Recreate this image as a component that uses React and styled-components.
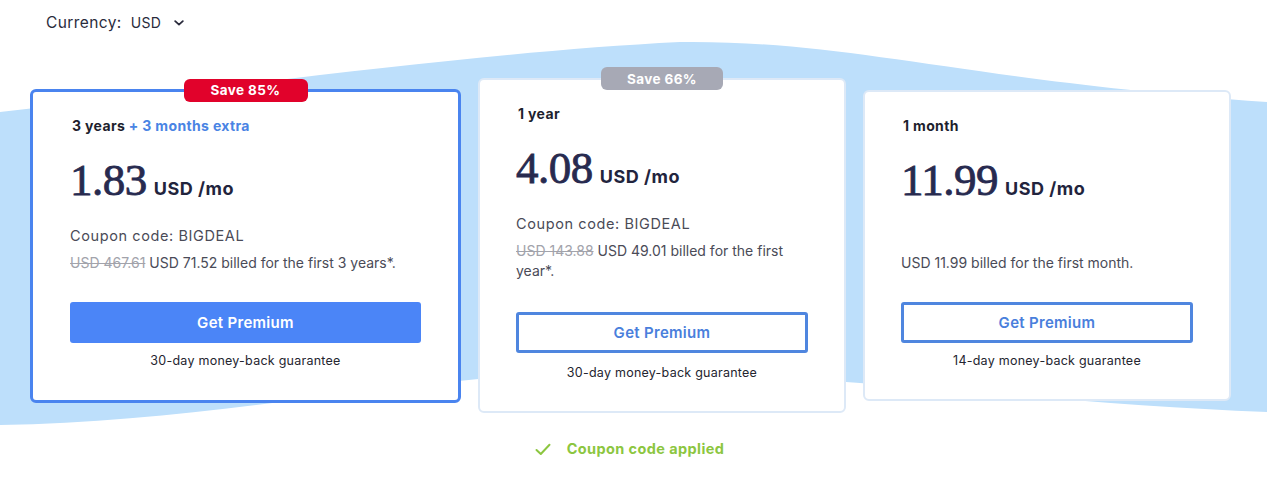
import React from "react";
import styled, { createGlobalStyle } from "styled-components";

const Global = createGlobalStyle`
  html, body { margin: 0; padding: 0; background: #ffffff; }
  body { font-family: "Inter", "Open Sans", sans-serif; color: #22243a; overflow: hidden; }
  * { box-sizing: border-box; }
`;

const Page = styled.div`
  position: relative;
  width: 1267px;
  height: 485px;
  overflow: hidden;
`;

const Wave = styled.svg`
  position: absolute;
  left: 0;
  top: 0;
  width: 1267px;
  height: 485px;
  z-index: 0;
`;

const Content = styled.div`
  position: relative;
  z-index: 1;
  display: flex;
  flex-direction: column;
`;

const CurrencyRow = styled.div`
  display: flex;
  align-items: center;
  gap: 9px;
  padding: 13px 0 0 46px;
  height: 33px;
  font-size: 15.5px;
  letter-spacing: 0.4px;
  line-height: 20px;
  color: #2a2b3c;
`;

const CurrencyValue = styled.span`
  display: inline-flex;
  align-items: center;
  gap: 13px;
  font-size: 14px;
  letter-spacing: 0.3px;
`;

const Cards = styled.div`
  display: flex;
  align-items: center;
  gap: 17px;
  padding-left: 30px;
  margin-top: 45px;
  height: 335px;
`;

const Card = styled.div`
  position: relative;
  width: ${(p) => (p.$featured ? "431px" : "368px")};
  background: #ffffff;
  border: ${(p) => (p.$featured ? "3px solid #4a84ef" : "2px solid #dde9f7")};
  border-radius: 6px;
  padding: 24px ${(p) => (p.$featured ? "37px" : "36px")} ${(p) => (p.$featured ? "30px" : "29px")};
  display: flex;
  flex-direction: column;
`;

const Badge = styled.div`
  position: absolute;
  top: -13px;
  left: 50%;
  transform: translateX(-50%);
  height: 23px;
  width: ${(p) => (p.$featured ? "124px" : "122px")};
  border-radius: 6px;
  background: ${(p) => p.$color};
  color: #ffffff;
  font-size: 13.5px;
  font-weight: 700;
  display: flex;
  align-items: center;
  justify-content: center;
  letter-spacing: 0.4px;
`;

const Term = styled.div`
  font-size: 14px;
  line-height: 20px;
  font-weight: 700;
  color: #1e1f2e;
  padding-left: 2px;
  letter-spacing: 0.35px;
`;

const Extra = styled.span`
  color: #4a84e4;
`;

const PriceRow = styled.div`
  display: flex;
  align-items: baseline;
  gap: 7px;
  margin-top: 19px;
  height: 50px;
`;

const Amount = styled.span`
  font-family: "Liberation Serif", "DejaVu Serif", serif;
  font-size: 45px;
  line-height: 50px;
  font-weight: 400;
  -webkit-text-stroke: 0.8px #272a4f;
  color: #272a4f;
  letter-spacing: -0.5px;
`;

const Unit = styled.span`
  font-size: 18px;
  font-weight: 700;
  letter-spacing: 0.5px;
  color: #22243d;
`;

const Line = styled.div`
  font-size: 14px;
  line-height: 20px;
  letter-spacing: 0px;
  color: #4a4b57;
  min-height: 20px;
  margin-top: ${(p) => p.$mt || "0px"};
`;

const Coupon = styled(Line)`
  font-size: 14.5px;
  letter-spacing: 0.6px;
`;

const Strike = styled.span`
  color: #a2a3ab;
  text-decoration: line-through;
`;

const Button = styled.button`
  margin-top: ${(p) => (p.$extra ? "31px" : "29px")};
  height: 41px;
  width: 100%;
  border-radius: 3px;
  font-family: "Inter", "Open Sans", sans-serif;
  font-size: 15px;
  letter-spacing: 0.3px;
  font-weight: 600;
  cursor: pointer;
  background: ${(p) => (p.$primary ? "#4b85f7" : "#ffffff")};
  color: ${(p) => (p.$primary ? "#ffffff" : "#4a7fdc")};
  border: ${(p) => (p.$primary ? "none" : "3px solid #4f86df")};
`;

const Guarantee = styled.div`
  margin-top: ${(p) => (p.$extra ? "11px" : "9px")};
  font-size: 12.5px;
  line-height: 18px;
  letter-spacing: 0.25px;
  text-align: center;
  color: #24252f;
`;

const Applied = styled.div`
  display: flex;
  align-items: center;
  justify-content: center;
  gap: 16px;
  margin-top: 26px;
  padding-right: 8px;
  font-size: 14.5px;
  letter-spacing: 0.4px;
  line-height: 20px;
  font-weight: 700;
  color: #8cc640;
`;

const Chevron = () => (
  <svg width="10" height="6" viewBox="0 0 10 6" fill="none">
    <path d="M1.2 1.2 L5 4.6 L8.8 1.2" stroke="#2a2b3c" strokeWidth="1.8" strokeLinecap="round" strokeLinejoin="round" />
  </svg>
);

const Check = () => (
  <svg width="16" height="13" viewBox="0 0 16 13" fill="none">
    <path d="M1.5 7 L5.8 11 L14.5 1.8" stroke="#8cc640" strokeWidth="2" strokeLinecap="round" strokeLinejoin="round" />
  </svg>
);

const plans = [
  {
    featured: true,
    badge: "Save 85%",
    badgeColor: "#e1022b",
    term: "3 years",
    extra: "+ 3 months extra",
    price: "1.83",
    coupon: "Coupon code: BIGDEAL",
    old: "USD 467.61",
    billed: "USD 71.52 billed for the first 3 years*.",
    guarantee: "30-day money-back guarantee",
  },
  {
    badge: "Save 66%",
    badgeColor: "#a7a9b5",
    term: "1 year",
    price: "4.08",
    coupon: "Coupon code: BIGDEAL",
    old: "USD 143.88",
    billed: "USD 49.01 billed for the first year*.",
    guarantee: "30-day money-back guarantee",
    wraps: true,
  },
  {
    term: "1 month",
    price: "11.99",
    coupon: "",
    billed: "USD 11.99 billed for the first month.",
    guarantee: "14-day money-back guarantee",
  },
];

export default function App() {
  return (
    <Page>
      <Global />
      <Wave viewBox="0 0 1267 485" preserveAspectRatio="none">
        <path
          d="M0 112 C 250 85, 480 52, 680 42 C 850 40, 960 80, 1267 102 L 1267 412 C 1050 404, 820 372, 620 372 C 420 372, 220 422, 0 425 Z"
          fill="#bddffb"
        />
      </Wave>
      <Content>
        <CurrencyRow>
          Currency:
          <CurrencyValue>
            USD <Chevron />
          </CurrencyValue>
        </CurrencyRow>
        <Cards>
          {plans.map((p) => (
            <Card key={p.term} $featured={p.featured}>
              {p.badge && (
                <Badge $featured={p.featured} $color={p.badgeColor}>
                  {p.badge}
                </Badge>
              )}
              <Term>
                {p.term} {p.extra && <Extra>{p.extra}</Extra>}
              </Term>
              <PriceRow>
                <Amount>{p.price}</Amount>
                <Unit>USD /mo</Unit>
              </PriceRow>
              <Coupon $mt="21px">{p.coupon}</Coupon>
              <Line $mt="7px">
                {p.old && <Strike>{p.old}</Strike>} {p.billed}
              </Line>
              <Button $primary={p.featured} $extra={p.wraps}>Get Premium</Button>
              <Guarantee $extra={p.wraps}>{p.guarantee}</Guarantee>
            </Card>
          ))}
        </Cards>
        <Applied>
          <Check />
          Coupon code applied
        </Applied>
      </Content>
    </Page>
  );
}
